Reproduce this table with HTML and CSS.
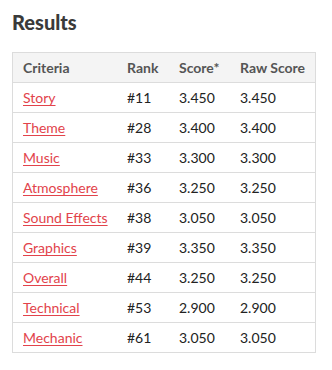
FILE: index.html
```html
<!DOCTYPE html>
<html>
<head>
<meta charset="utf-8">
<link rel="stylesheet" href="styles.css">
</head>
<body>
<div class="page">
  <h2 class="title">Results</h2>
  <table class="results">
    <thead>
      <tr><th class="c1">Criteria</th><th class="c2">Rank</th><th class="c3">Score*</th><th class="c4">Raw Score</th></tr>
    </thead>
    <tbody>
      <tr><td><a href="#">Story</a></td><td>#11</td><td>3.450</td><td>3.450</td></tr>
      <tr><td><a href="#">Theme</a></td><td>#28</td><td>3.400</td><td>3.400</td></tr>
      <tr><td><a href="#">Music</a></td><td>#33</td><td>3.300</td><td>3.300</td></tr>
      <tr><td><a href="#">Atmosphere</a></td><td>#36</td><td>3.250</td><td>3.250</td></tr>
      <tr><td><a href="#">Sound Effects</a></td><td>#38</td><td>3.050</td><td>3.050</td></tr>
      <tr><td><a href="#">Graphics</a></td><td>#39</td><td>3.350</td><td>3.350</td></tr>
      <tr><td><a href="#">Overall</a></td><td>#44</td><td>3.250</td><td>3.250</td></tr>
      <tr><td><a href="#">Technical</a></td><td>#53</td><td>2.900</td><td>2.900</td></tr>
      <tr><td><a href="#">Mechanic</a></td><td>#61</td><td>3.050</td><td>3.050</td></tr>
    </tbody>
  </table>
</div>
</body>
</html>
```

FILE: styles.css
```css
html, body {
  margin: 0;
  padding: 0;
  background: #ffffff;
}
.page {
  padding: 9px 12px 0 12px;
  font-family: Lato, "Open Sans", sans-serif;
  color: #222222;
}
.title {
  margin: 0 0 17px 0;
  font-size: 20px;
  font-weight: 900;
  line-height: 26px;
  color: #3a3a3a;
}
.results {
  width: 304px;
  border-collapse: collapse;
  border: 1px solid #dcdcdc;
  font-size: 14px;
  table-layout: fixed;
}
.results th, .results td {
  height: 29px;
  padding: 0 0 0 10px;
  text-align: left;
  vertical-align: middle;
  border-bottom: 1px solid #dcdcdc;
  white-space: nowrap;
}
.results th {
  background: #f4f4f4;
  color: #555555;
  font-weight: 700;
}
.c1 { width: 94px; }
.c2 { width: 42px; }
.c3 { width: 51px; }
.c4 { width: auto; }
.results a {
  color: #e2434b;
  text-decoration: underline;
  text-underline-offset: 2px;
}
```
